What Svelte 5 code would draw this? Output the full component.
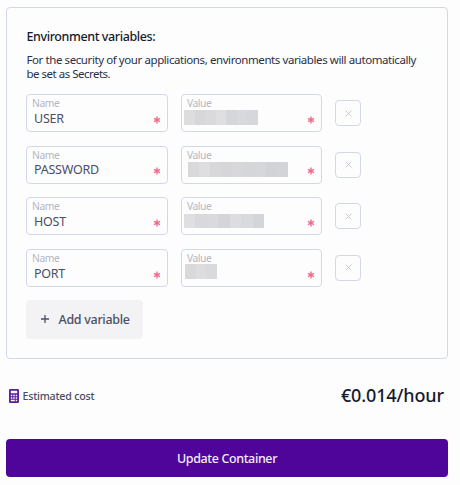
<script>
  const variables = [
    { name: 'USER', x: 2, w: 74, top: 15, h: 15, c: ['#dddddf', '#d7d7da', '#dadadc', '#dfdfe1', '#d5d6d9', '#d8d9dc', '#d6d7db'] },
    { name: 'PASSWORD', x: 6, w: 100, top: 15, h: 15, c: ['#d9d9dc', '#dedee0', '#d8d8db', '#d6d6da', '#d8d8db', '#d5d6d9', '#d6d7da', '#d2d3d7', '#d3d4d8'] },
    { name: 'HOST', x: 2, w: 80, top: 16, h: 14, c: ['#dfdfe2', '#d8d8dd', '#dadade', '#d4d5da', '#dddde1', '#d9dade', '#d4d5d9'] },
    { name: 'PORT', x: 3, w: 32, top: 14, h: 15, c: ['#d9d9dc', '#dddddf', '#dadadd'] }
  ];
</script>

{#snippet star()}
  <svg class="star" viewBox="0 0 8 8" aria-hidden="true"><path d="M4 .6v6.8M1 2.3l6 3.4M7 2.3l-6 3.4" /></svg>
{/snippet}

<main>
  <section class="card">
    <h2><span>Environment variables:</span></h2>
    <p><span class="l1">For the security of your applications, environments variables will automatically</span><br /><span class="l2">be set as Secrets.</span></p>
    <div class="rows">
      {#each variables as v}
        <div class="row">
          <div class="field name">
            <span class="label">Name</span>
            <span class="val" class:low={v.name !== 'PASSWORD'}>{v.name}</span>
            {@render star()}
          </div>
          <div class="field value">
            <span class="label">Value</span>
            <div class="mask" style="left:{v.x}px;top:{v.top}px;width:{v.w}px;height:{v.h}px">
              {#each v.c as color}<i style="background:{color}"></i>{/each}
            </div>
            {@render star()}
          </div>
          <button class="remove" aria-label="Remove">
            <svg width="7" height="7" viewBox="0 0 7 7"><path d="M.6.6l5.8 5.8M6.4.6L.6 6.4" /></svg>
          </button>
        </div>
      {/each}
    </div>
    <button class="add">
      <svg width="8" height="8" viewBox="0 0 8 8"><path d="M4 0v8M0 4h8" /></svg>
      <span>Add variable</span>
    </button>
  </section>

  <div class="cost">
    <svg width="10" height="14" viewBox="0 0 10 14">
      <rect width="10" height="14" rx="1.3" fill="#5a1ba5" />
      <path fill="#fff" d="M1.8 1.8h6.4v2.4H1.8zM1.8 5.8h1.5v1.5H1.8zM4.25 5.8h1.5v1.5h-1.5zM6.7 5.8h1.5v1.5H6.7zM1.8 8.2h1.5v1.5H1.8zM4.25 8.2h1.5v1.5h-1.5zM6.7 8.2h1.5v1.5H6.7zM1.8 10.7h3.95v1.5H1.8zM6.7 10.7h1.5v1.5H6.7z" />
    </svg>
    <span class="est">Estimated cost</span>
    <span class="price">€0.014/hour</span>
  </div>

  <button class="update"><span>Update Container</span></button>
</main>

<style>
  :global(body) { background: #fdfdfe; }
  * { box-sizing: border-box; }
  main {
    width: 460px;
    height: 485px;
    padding: 7px 12px 0 6px;
    font-family: "Noto Sans", sans-serif;
    color: #151a2d;
    overflow: hidden;
  }
  span { white-space: nowrap; }
  button { font: inherit; padding: 0; border: 0; }
  .card {
    height: 352px;
    padding: 20px 19px 0;
    border: 1px solid #d2d8e7;
    border-radius: 4px;
  }
  h2 { margin: 0; height: 18px; padding-left: .5px; font-size: 12.5px; line-height: 18px; font-weight: 500; letter-spacing: -0.4px; }
  p { margin: 7px 0 0; height: 28px; padding-left: .5px; font-size: 11.5px; line-height: 14px; color: #2b3045; }
  .l1 { letter-spacing: -0.415px; }
  .l2 { letter-spacing: -0.5px; }
  .rows { display: flex; flex-direction: column; gap: 13.6px; margin-top: 13px; }
  .row { display: flex; align-items: center; height: 38px; }
  .field { position: relative; height: 38px; border: 1px solid #d2d8e7; border-radius: 4px; padding: 1px 0 0 5px; display: flex; flex-direction: column; }
  .name { width: 142px; margin-right: 13px; }
  .value { width: 141px; margin-right: 13px; }
  .label { font-size: 10.3px; line-height: 14px; color: #b4b7c4; letter-spacing: -0.45px; }
  .val { padding-left: 2px; font-size: 12.5px; line-height: 16px; color: #4a4f62; letter-spacing: -0.25px; }
  .low { line-height: 18px; }
  .star { position: absolute; right: 6px; bottom: 7.2px; width: 8px; height: 8px; fill: none; stroke: #f0698b; stroke-width: 1.4; }
  .mask { position: absolute; display: flex; }
  .mask i { flex: 1; }
  .remove { display: flex; align-items: center; justify-content: center; width: 26px; height: 26px; border: 1px solid #d2d8e7; border-radius: 4px; background: none; }
  .remove path { stroke: #c9cddb; stroke-width: 1; }
  .add { display: flex; align-items: center; width: 117px; height: 39px; margin-top: 13.2px; padding-left: 15px; background: #f3f3f6; border-radius: 4px; color: #4a4f62; font-size: 12.5px; font-weight: 500; letter-spacing: -0.3px; }
  .add svg { margin-right: 9.5px; }
  .add path { stroke: #4a4f62; stroke-width: 1.3; }
  .cost { display: flex; align-items: center; height: 28px; margin-top: 23px; padding: 0 4px 0 3px; }
  .est { margin-left: 3.5px; font-size: 10.7px; font-weight: 500; color: #4a4f62; letter-spacing: -0.23px; }
  .price { margin-left: auto; position: relative; top: -1px; font-size: 18px; font-weight: 500; letter-spacing: -0.13px; }
  .update { display: block; width: 442px; height: 38px; margin-top: 29px; border-radius: 4px; background: #4f0599; color: #f4eefa; font-size: 12.5px; font-weight: 500; letter-spacing: -0.37px; }
</style>
